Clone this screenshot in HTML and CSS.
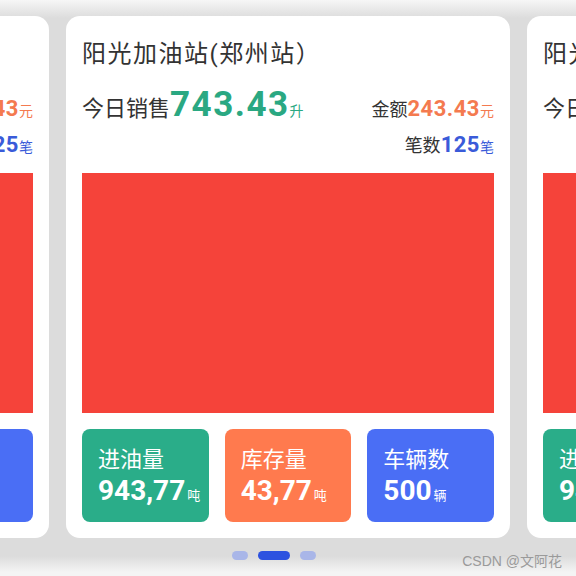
FILE: index.html
```html
<!DOCTYPE html>
<html>
<head>
    <title>加油站看板</title>
    <link rel="stylesheet" href="styles.css">
</head>
<body>
    <div class="swiper">
        <div class="track">
            <div class="card">
                <div class="station">阳光加油站(郑州站）</div>
                <div class="summary">
                    <div class="sale">今日销售<span class="big">743.43</span><span class="unit green">升</span></div>
                    <div class="stats">
                        <div class="stat">金额<span class="num orange">243.43</span><span class="unit orange">元</span></div>
                        <div class="stat">笔数<span class="num blue">125</span><span class="unit blue">笔</span></div>
                    </div>
                </div>
                <div class="chart"></div>
                <div class="tiles">
                    <div class="tile tile-green"><div class="tile-name">进油量</div><div class="tile-value">943,77<span>吨</span></div></div>
                    <div class="tile tile-orange"><div class="tile-name">库存量</div><div class="tile-value">43,77<span>吨</span></div></div>
                    <div class="tile tile-blue"><div class="tile-name">车辆数</div><div class="tile-value">500<span>辆</span></div></div>
                </div>
            </div>
            <div class="card">
                <div class="station">阳光加油站(郑州站）</div>
                <div class="summary">
                    <div class="sale">今日销售<span class="big">743.43</span><span class="unit green">升</span></div>
                    <div class="stats">
                        <div class="stat">金额<span class="num orange">243.43</span><span class="unit orange">元</span></div>
                        <div class="stat">笔数<span class="num blue">125</span><span class="unit blue">笔</span></div>
                    </div>
                </div>
                <div class="chart"></div>
                <div class="tiles">
                    <div class="tile tile-green"><div class="tile-name">进油量</div><div class="tile-value">943,77<span>吨</span></div></div>
                    <div class="tile tile-orange"><div class="tile-name">库存量</div><div class="tile-value">43,77<span>吨</span></div></div>
                    <div class="tile tile-blue"><div class="tile-name">车辆数</div><div class="tile-value">500<span>辆</span></div></div>
                </div>
            </div>
            <div class="card">
                <div class="station">阳光加油站(郑州站）</div>
                <div class="summary">
                    <div class="sale">今日销售<span class="big">743.43</span><span class="unit green">升</span></div>
                    <div class="stats">
                        <div class="stat">金额<span class="num orange">243.43</span><span class="unit orange">元</span></div>
                        <div class="stat">笔数<span class="num blue">125</span><span class="unit blue">笔</span></div>
                    </div>
                </div>
                <div class="chart"></div>
                <div class="tiles">
                    <div class="tile tile-green"><div class="tile-name">进油量</div><div class="tile-value">943,77<span>吨</span></div></div>
                    <div class="tile tile-orange"><div class="tile-name">库存量</div><div class="tile-value">43,77<span>吨</span></div></div>
                    <div class="tile tile-blue"><div class="tile-name">车辆数</div><div class="tile-value">500<span>辆</span></div></div>
                </div>
            </div>
        </div>
        <div class="dots">
            <span class="dot"></span>
            <span class="dot active"></span>
            <span class="dot"></span>
        </div>
    </div>
    <div class="watermark">CSDN @文阿花</div>
</body>
</html>
```
FILE: styles.css
```css
body {
    margin: 0;
    background: #f6f6f6;
    font-family: Roboto, "Noto Sans CJK SC", sans-serif;
    color: #333;
    overflow: hidden;
}
.swiper {
    height: 576px;
    padding-top: 16px;
    box-sizing: border-box;
    background: linear-gradient(to bottom, #f6f6f6 0, #dcdcdc 18px, #dcdcdc 556px, #f4f4f4 572px);
}
.track {
    display: flex;
    justify-content: center;
    gap: 17px;
    overflow: hidden;
}
.card {
    flex-shrink: 0;
    width: 444px;
    height: 522px;
    box-sizing: border-box;
    padding: 22px 16px 16px;
    background: #fff;
    border-radius: 14px;
}
.station {
    font-size: 24px;
    line-height: 32px;
    letter-spacing: 1.5px;
    color: #333;
}
.summary {
    display: flex;
    justify-content: space-between;
    align-items: baseline;
    height: 83px;
    margin-top: 20px;
    white-space: nowrap;
}
.sale {
    font-size: 22px;
    line-height: 30px;
}
.big {
    font-size: 35px;
    font-weight: bold;
    color: #2aa882;
    letter-spacing: 1.5px;
}
.unit {
    font-size: 14px;
}
.green { color: #2aa882; }
.orange { color: #f47a4f; }
.blue { color: #3a5bd9; }
.stats {
    text-align: right;
}
.stat {
    font-size: 18px;
    line-height: 33px;
}
.num {
    font-size: 22px;
    font-weight: bold;
    letter-spacing: 0.5px;
}
.chart {
    height: 240px;
    background: #f5433a;
}
.tiles {
    display: grid;
    grid-template-columns: repeat(3, minmax(0, 1fr));
    gap: 16px;
    margin-top: 16px;
}
.tile {
    height: 93px;
    box-sizing: border-box;
    padding: 16px 16px 0;
    border-radius: 8px;
    color: #fff;
    white-space: nowrap;
}
.tile-green { background: #2aad89; }
.tile-orange { background: #ff7a4e; }
.tile-blue { background: #4a6ef5; }
.tile-name {
    font-size: 22px;
    line-height: 30px;
}
.tile-value {
    font-size: 28px;
    font-weight: bold;
    line-height: 32px;
}
.tile-value span {
    font-size: 13px;
    font-weight: normal;
    margin-left: 2px;
}
.dots {
    display: flex;
    justify-content: center;
    gap: 10px;
    margin-top: 13px;
    padding-right: 29px;
}
.dot {
    width: 16px;
    height: 9px;
    border-radius: 5px;
    background: #a9b6e8;
}
.dot.active {
    width: 32px;
    background: #2d52e0;
}
.watermark {
    position: absolute;
    right: 14px;
    bottom: 6px;
    font-family: "Liberation Sans", "Noto Sans CJK SC", sans-serif;
    font-size: 14px;
    color: #9a9a9a;
}
```
